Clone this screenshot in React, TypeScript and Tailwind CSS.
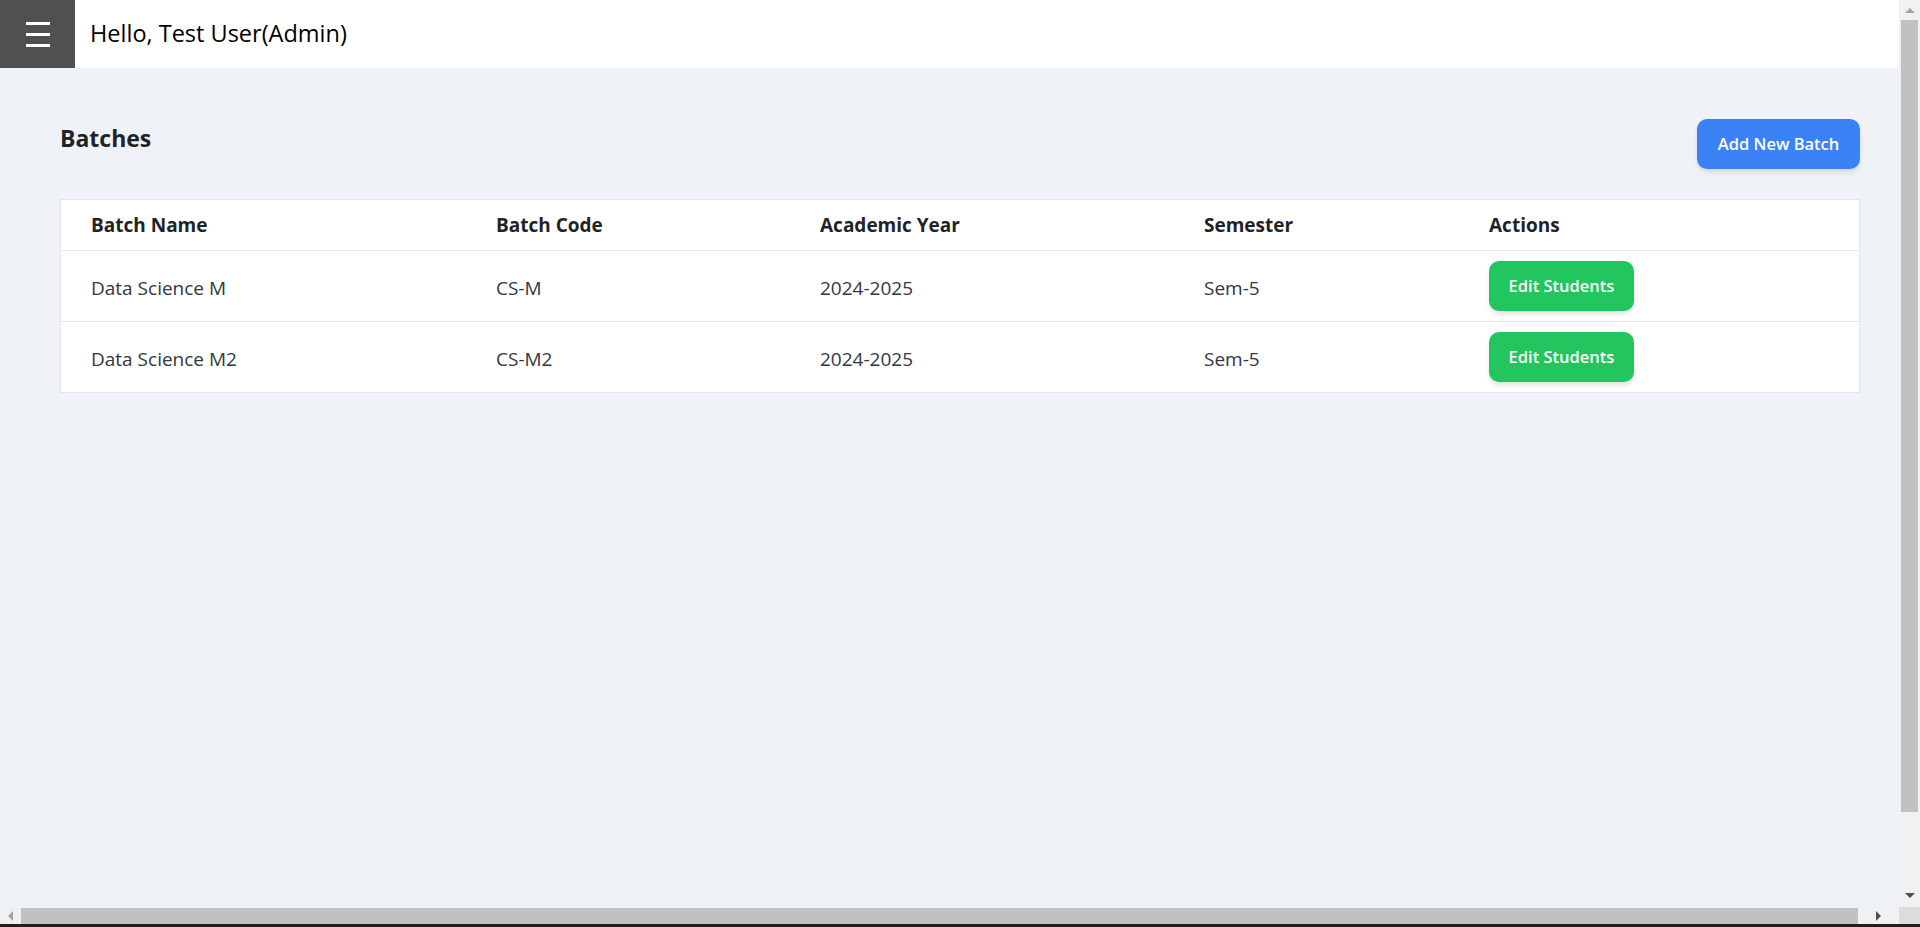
import React from "react";

const rows = [
  { name: "Data Science M", code: "CS-M", year: "2024-2025", sem: "Sem-5" },
  { name: "Data Science M2", code: "CS-M2", year: "2024-2025", sem: "Sem-5" },
];

function Tri({ dir, color }: { dir: "up" | "down" | "left" | "right"; color: string }) {
  const pts =
    dir === "up"
      ? "0,6 5,1 10,6"
      : dir === "down"
      ? "0,1 10,1 5,6"
      : dir === "left"
      ? "6,0 6,10 1,5"
      : "1,0 1,10 6,5";
  const w = dir === "up" || dir === "down" ? 10 : 7;
  const h = dir === "up" || dir === "down" ? 7 : 10;
  return (
    <svg width={w} height={h} viewBox={`0 0 ${w} ${h}`}>
      <polygon points={pts} fill={color} />
    </svg>
  );
}

export default function App() {
  return (
    <div
      className="w-[1920px] h-[927px] flex flex-col overflow-hidden bg-[#eff3f8]"
      style={{ fontFamily: '"Open Sans", "Noto Sans", sans-serif' }}
    >
      <div className="flex h-[907px]">
        {/* main page */}
        <div className="flex-1 flex flex-col min-w-0">
          <header className="h-[68px] bg-white flex items-center shrink-0">
            <div className="w-[75px] h-full bg-[#505050] flex flex-col items-center justify-center gap-[8px]">
              <span className="block w-[24px] h-[3px] bg-white" />
              <span className="block w-[24px] h-[3px] bg-white" />
              <span className="block w-[24px] h-[3px] bg-white" />
            </div>
            <div className="ml-[15px] text-[23.5px] text-black leading-none">Hello, Test User(Admin)</div>
          </header>

          <main className="pl-[60px] pr-[39px] pt-[51px]">
            <div className="flex justify-between items-start">
              <h1 className="text-[23px] font-bold text-[#1f2328] leading-[38px]">Batches</h1>
              <button className="w-[163px] h-[50px] rounded-[10px] bg-[#3b82f6] text-white text-[16.5px] font-semibold shadow-md">
                Add New Batch
              </button>
            </div>

            <div className="mt-[30px] bg-white border border-[#e2e6ec]">
              <table className="w-full table-fixed">
                <colgroup>
                  <col className="w-[405px]" />
                  <col className="w-[324px]" />
                  <col className="w-[384px]" />
                  <col className="w-[285px]" />
                  <col />
                </colgroup>
                <thead>
                  <tr className="border-b border-[#e2e6ec]">
                    {["Batch Name", "Batch Code", "Academic Year", "Semester", "Actions"].map((h) => (
                      <th
                        key={h}
                        className="text-left px-[30px] h-[50px] pt-[2px] text-[19px] font-bold text-[#1f2328] leading-[25px]"
                      >
                        {h}
                      </th>
                    ))}
                  </tr>
                </thead>
                <tbody>
                  {rows.map((r, i) => (
                    <tr key={r.code} className={i < rows.length - 1 ? "border-b border-[#e2e6ec]" : ""}>
                      <td className="px-[30px] pt-[13px] pb-[7px] text-[19px] text-[#333740] leading-[25px]">{r.name}</td>
                      <td className="px-[30px] pt-[13px] pb-[7px] text-[19px] text-[#333740] leading-[25px]">{r.code}</td>
                      <td className="px-[30px] pt-[13px] pb-[7px] text-[19px] text-[#333740] leading-[25px]">{r.year}</td>
                      <td className="px-[30px] pt-[13px] pb-[7px] text-[19px] text-[#333740] leading-[25px]">{r.sem}</td>
                      <td className="px-[30px] py-[10px]">
                        <button className="w-[145px] h-[50px] pt-[2px] rounded-[10px] bg-[#22c55e] text-white text-[16.5px] font-semibold shadow-md">
                          Edit Students
                        </button>
                      </td>
                    </tr>
                  ))}
                </tbody>
              </table>
            </div>
          </main>
        </div>

        {/* vertical scrollbar */}
        <div className="w-[21px] h-full bg-[#f1f1f1] flex flex-col items-center">
          <div className="h-[20px] flex items-center justify-center">
            <Tri dir="up" color="#a3a3a3" />
          </div>
          <div className="w-[17px] h-[792px] bg-[#c1c1c1]" />
          <div className="flex-1 flex items-end justify-center pb-[8px]">
            <Tri dir="down" color="#505050" />
          </div>
        </div>
      </div>

      {/* horizontal scrollbar */}
      <div className="h-[17px] flex bg-[#f1f1f1]">
        <div className="flex-1 flex items-center">
          <div className="w-[21px] flex items-center justify-center">
            <Tri dir="left" color="#a3a3a3" />
          </div>
          <div className="w-[1837px] h-[16px] bg-[#c1c1c1]" />
          <div className="flex-1 flex items-center justify-center">
            <Tri dir="right" color="#505050" />
          </div>
        </div>
        <div className="w-[21px] bg-[#dcdcdc]" />
      </div>
      <div className="h-[3px] bg-[#202020]" />
    </div>
  );
}
